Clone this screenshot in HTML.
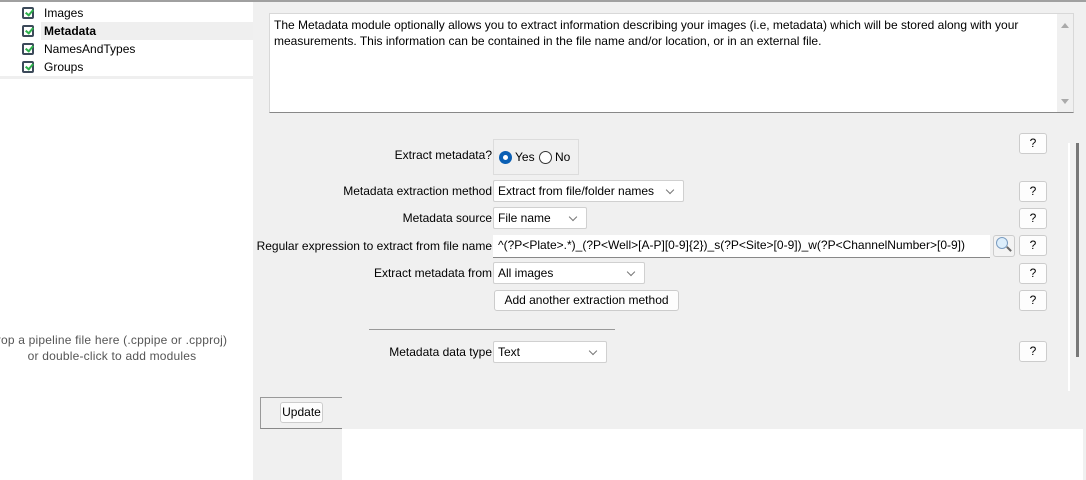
<!DOCTYPE html>
<html><head><style>
*{box-sizing:border-box;margin:0;padding:0}
body{width:1086px;height:480px;overflow:hidden;background:#f0f0f0;font-family:"Liberation Sans",sans-serif;font-size:12px;color:#000;position:relative}
.a{position:absolute}
.left{left:0;top:0;width:253px;height:480px;background:#fff;border-top:2px solid #a0a0a0}
.item{position:absolute;left:44px;font-size:12px;line-height:16px}
.chk{position:absolute;left:22px;width:12px;height:12px;border:2px solid #3c4a5a;border-radius:2px;background:#fff}
.chk:after{content:"";position:absolute;left:3px;top:-1px;width:3px;height:6px;border:solid #2db04b;border-width:0 2px 2px 0;transform:rotate(40deg)}
.lbl{position:absolute;text-align:right;right:594px;font-size:12px;white-space:nowrap}
.dd{position:absolute;height:22px;background:#fff;border:1px solid #d0d0d0;border-radius:2px;padding:3px 4px;font-size:12px;white-space:nowrap}
.dd:after{content:"";position:absolute;right:10px;top:6px;width:5px;height:5px;border:solid #777;border-width:0 1px 1px 0;transform:rotate(45deg)}
.q{position:absolute;left:1019px;width:28px;height:21px;background:#fdfdfd;border:1px solid #ccc;border-radius:3px;text-align:center;line-height:19px;font-size:12px}
.btn{position:absolute;background:#fdfdfd;border:1px solid #ccc;border-radius:3px;text-align:center;font-size:12px}
</style></head><body>
<div class="a left">
 <div class="a" style="left:41px;top:20px;width:212px;height:18px;background:#efefef"></div>
 <div class="chk" style="top:5px"></div><div class="item" style="top:3px">Images</div>
 <div class="chk" style="top:23px"></div><div class="item" style="top:21px;font-weight:bold">Metadata</div>
 <div class="chk" style="top:41px"></div><div class="item" style="top:39px">NamesAndTypes</div>
 <div class="chk" style="top:59px"></div><div class="item" style="top:57px">Groups</div>
 <div class="a" style="left:0;top:74px;width:253px;height:3px;background:#efefef"></div>
 <div class="a" style="left:-8px;top:330px;width:240px;text-align:center;color:#555;line-height:16px;white-space:nowrap;letter-spacing:0.2px">rop a pipeline file here (.cppipe or .cpproj)<br>or double-click to add modules</div>
</div>
<div class="a" style="left:253px;top:0;width:833px;height:2px;background:#a0a0a0"></div>
<div class="a" style="left:269px;top:13px;width:805px;height:100px;background:#fff;border:1px solid #d8d8d8;border-bottom:1px solid #888;padding:3px 4px;line-height:16px">
The Metadata module optionally allows you to extract information describing your images (i.e, metadata) which will be stored along with your measurements. This information can be contained in the file name and/or location, or in an external file.
 <div class="a" style="right:0;top:0;width:16px;height:98px;background:#f0f0f0"></div>
 <div class="a" style="right:4px;top:9px;border:4px solid transparent;border-bottom:5px solid #aaa;border-top:0"></div>
 <div class="a" style="right:4px;bottom:8px;border:4px solid transparent;border-top:5px solid #aaa;border-bottom:0"></div>
</div>
<div class="lbl" style="top:148px">Extract metadata?</div>
<div class="a" style="left:493px;top:139px;width:86px;height:36px;border:1px solid #dcdcdc"></div>
<div class="a" style="left:499px;top:151px;width:13px;height:13px;border-radius:50%;background:#0a5fb4"></div>
<div class="a" style="left:503px;top:155px;width:5px;height:5px;border-radius:50%;background:#fff"></div>
<div class="a" style="left:515px;top:150px">Yes</div>
<div class="a" style="left:539px;top:151px;width:13px;height:13px;border-radius:50%;border:1px solid #333;background:#fff"></div>
<div class="a" style="left:555px;top:150px">No</div>
<div class="q" style="top:133px">?</div>

<div class="lbl" style="top:184px">Metadata extraction method</div>
<div class="dd" style="left:493px;top:180px;width:191px">Extract from file/folder names</div>
<div class="q" style="top:181px">?</div>

<div class="lbl" style="top:211px">Metadata source</div>
<div class="dd" style="left:493px;top:207px;width:94px">File name</div>
<div class="q" style="top:208px">?</div>

<div class="lbl" style="top:239px">Regular expression to extract from file name</div>
<div class="a" style="left:493px;top:235px;width:497px;height:23px;background:#fff;border-bottom:1px solid #888;padding:3px 5px;white-space:nowrap">^(?P&lt;Plate&gt;.*)_(?P&lt;Well&gt;[A-P][0-9]{2})_s(?P&lt;Site&gt;[0-9])_w(?P&lt;ChannelNumber&gt;[0-9])</div>
<div class="btn" style="left:993px;top:235px;width:22px;height:22px;background:#f3f3f3"></div>
<div class="a" style="left:996px;top:237px;width:12px;height:12px;border-radius:50%;border:1px solid #7a9cc0;background:#dceefc"></div>
<div class="a" style="left:1006px;top:248px;width:6px;height:2px;background:#666;transform:rotate(45deg)"></div>
<div class="q" style="top:235px">?</div>

<div class="lbl" style="top:266px">Extract metadata from</div>
<div class="dd" style="left:493px;top:262px;width:152px">All images</div>
<div class="q" style="top:263px">?</div>

<div class="btn" style="left:494px;top:290px;width:185px;height:21px;line-height:19px">Add another extraction method</div>
<div class="q" style="top:290px">?</div>

<div class="a" style="left:369px;top:329px;width:246px;height:1px;background:#999"></div>
<div class="lbl" style="top:345px">Metadata data type</div>
<div class="dd" style="left:493px;top:341px;width:114px">Text</div>
<div class="q" style="top:341px">?</div>

<div class="a" style="left:1068px;top:143px;width:2px;height:248px;background:#fff"></div>
<div class="a" style="left:1076px;top:143px;width:3px;height:214px;background:#777"></div>

<div class="a" style="left:260px;top:397px;width:82px;height:32px;border:1px solid #999;border-bottom:1px solid #888;border-right:none"></div>
<div class="btn" style="left:280px;top:402px;width:43px;height:21px;line-height:19px">Update</div>
<div class="a" style="left:342px;top:429px;width:741px;height:51px;background:#fff"></div>
</body></html>
